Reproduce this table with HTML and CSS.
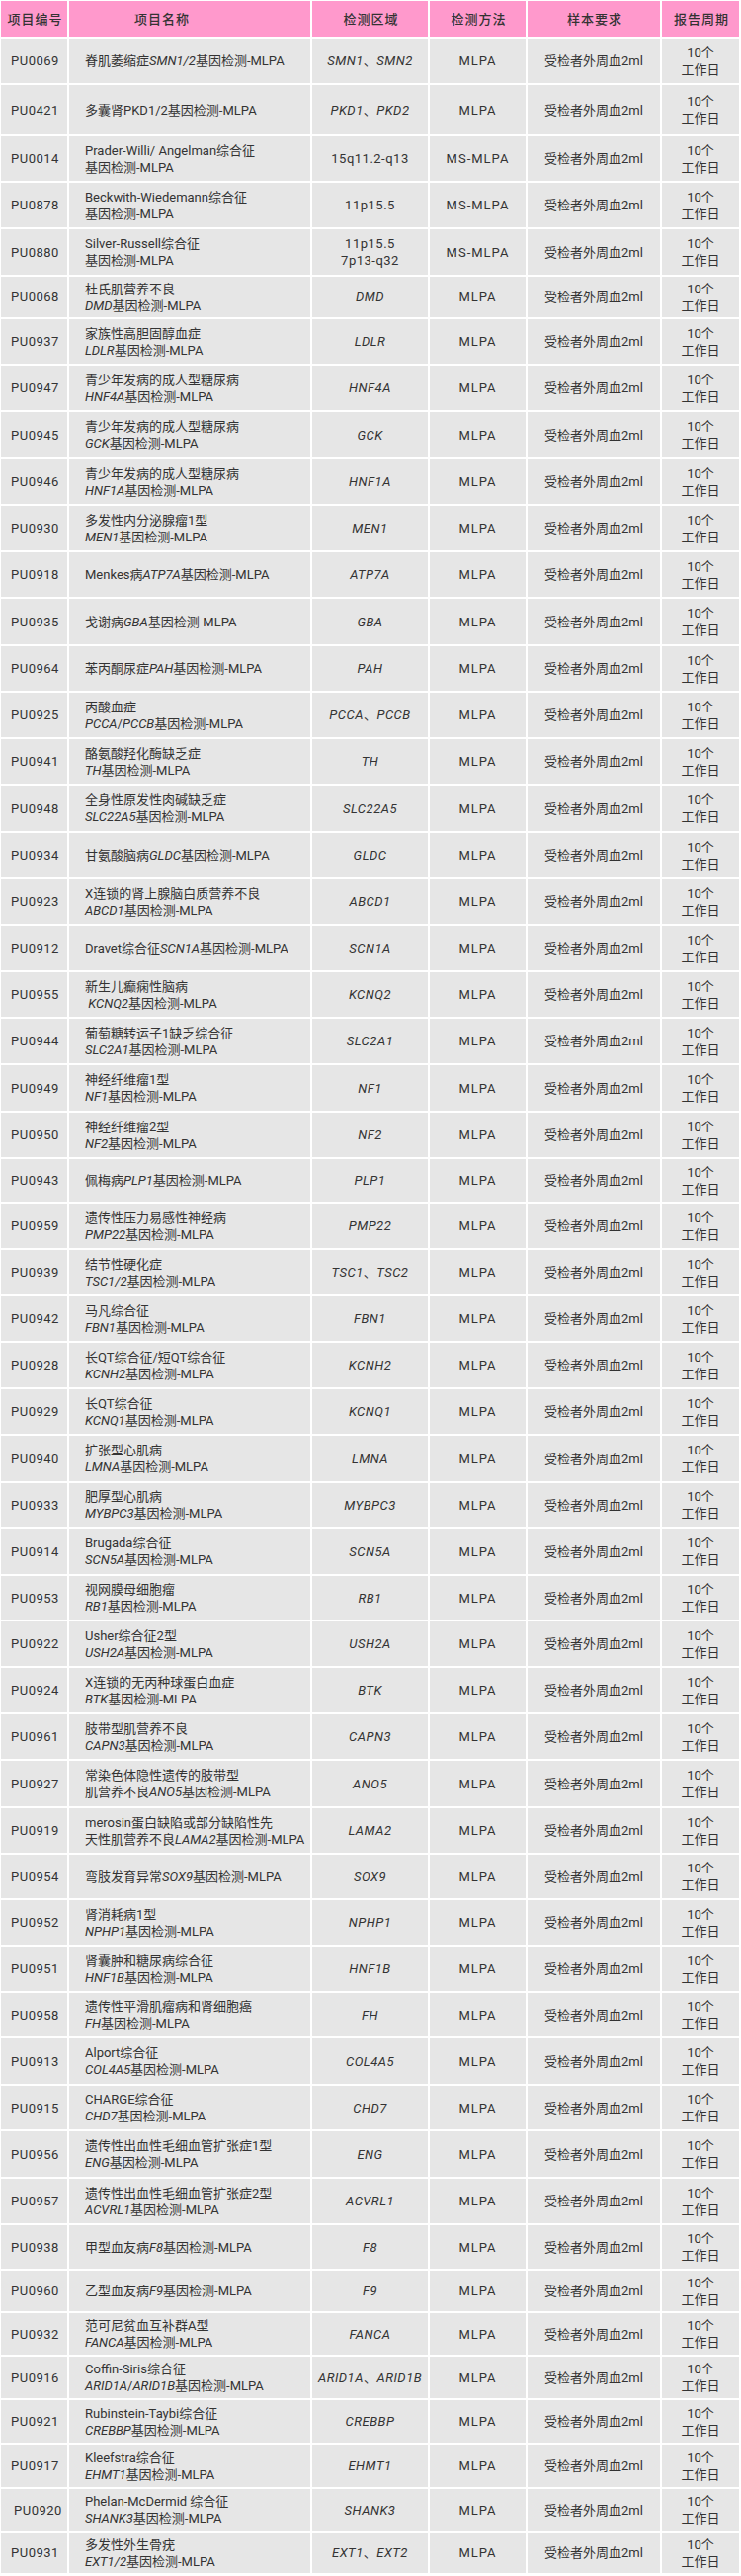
FILE: index.html
```html
<!DOCTYPE html>
<html lang="zh-CN">
<head>
<meta charset="utf-8">
<title>MLPA 检测项目</title>
<link rel="stylesheet" href="styles.css">
</head>
<body>
<div class="table">
  <div class="row head"><div class="cell"><span>项目编号</span></div><div class="cell hname"><span>项目名称</span></div><div class="cell"><span>检测区域</span></div><div class="cell"><span>检测方法</span></div><div class="cell"><span>样本要求</span></div><div class="cell"><span>报告周期</span></div></div>

  <div class="row"><div class="cell code"><span>PU0069</span></div><div class="cell name"><span>脊肌萎缩症<i>SMN1/2</i>基因检测-MLPA</span></div><div class="cell gene"><span><i>SMN1</i>、<i>SMN2</i></span></div><div class="cell m"><span>MLPA</span></div><div class="cell"><span>受检者外周血2ml</span></div><div class="cell"><span>10个<br>工作日</span></div></div>
  <div class="row"><div class="cell code"><span>PU0421</span></div><div class="cell name"><span>多囊肾PKD1/2基因检测-MLPA</span></div><div class="cell gene"><span><i>PKD1</i>、<i>PKD2</i></span></div><div class="cell m"><span>MLPA</span></div><div class="cell"><span>受检者外周血2ml</span></div><div class="cell"><span>10个<br>工作日</span></div></div>
  <div class="row"><div class="cell code"><span>PU0014</span></div><div class="cell name"><span>Prader-Willi/ Angelman综合征<br>基因检测-MLPA</span></div><div class="cell gene"><span>15q11.2-q13</span></div><div class="cell m"><span>MS-MLPA</span></div><div class="cell"><span>受检者外周血2ml</span></div><div class="cell"><span>10个<br>工作日</span></div></div>
  <div class="row"><div class="cell code"><span>PU0878</span></div><div class="cell name"><span>Beckwith-Wiedemann综合征<br>基因检测-MLPA</span></div><div class="cell gene"><span>11p15.5</span></div><div class="cell m"><span>MS-MLPA</span></div><div class="cell"><span>受检者外周血2ml</span></div><div class="cell"><span>10个<br>工作日</span></div></div>
  <div class="row"><div class="cell code"><span>PU0880</span></div><div class="cell name"><span>Silver-Russell综合征<br>基因检测-MLPA</span></div><div class="cell gene"><span>11p15.5<br>7p13-q32</span></div><div class="cell m"><span>MS-MLPA</span></div><div class="cell"><span>受检者外周血2ml</span></div><div class="cell"><span>10个<br>工作日</span></div></div>
  <div class="row"><div class="cell code"><span>PU0068</span></div><div class="cell name"><span>杜氏肌营养不良<br><i>DMD</i>基因检测-MLPA</span></div><div class="cell gene"><span><i>DMD</i></span></div><div class="cell m"><span>MLPA</span></div><div class="cell"><span>受检者外周血2ml</span></div><div class="cell"><span>10个<br>工作日</span></div></div>
  <div class="row"><div class="cell code"><span>PU0937</span></div><div class="cell name"><span>家族性高胆固醇血症<br><i>LDLR</i>基因检测-MLPA</span></div><div class="cell gene"><span><i>LDLR</i></span></div><div class="cell m"><span>MLPA</span></div><div class="cell"><span>受检者外周血2ml</span></div><div class="cell"><span>10个<br>工作日</span></div></div>
  <div class="row"><div class="cell code"><span>PU0947</span></div><div class="cell name"><span>青少年发病的成人型糖尿病<br><i>HNF4A</i>基因检测-MLPA</span></div><div class="cell gene"><span><i>HNF4A</i></span></div><div class="cell m"><span>MLPA</span></div><div class="cell"><span>受检者外周血2ml</span></div><div class="cell"><span>10个<br>工作日</span></div></div>
  <div class="row"><div class="cell code"><span>PU0945</span></div><div class="cell name"><span>青少年发病的成人型糖尿病<br><i>GCK</i>基因检测-MLPA</span></div><div class="cell gene"><span><i>GCK</i></span></div><div class="cell m"><span>MLPA</span></div><div class="cell"><span>受检者外周血2ml</span></div><div class="cell"><span>10个<br>工作日</span></div></div>
  <div class="row"><div class="cell code"><span>PU0946</span></div><div class="cell name"><span>青少年发病的成人型糖尿病<br><i>HNF1A</i>基因检测-MLPA</span></div><div class="cell gene"><span><i>HNF1A</i></span></div><div class="cell m"><span>MLPA</span></div><div class="cell"><span>受检者外周血2ml</span></div><div class="cell"><span>10个<br>工作日</span></div></div>
  <div class="row"><div class="cell code"><span>PU0930</span></div><div class="cell name"><span>多发性内分泌腺瘤1型<br><i>MEN1</i>基因检测-MLPA</span></div><div class="cell gene"><span><i>MEN1</i></span></div><div class="cell m"><span>MLPA</span></div><div class="cell"><span>受检者外周血2ml</span></div><div class="cell"><span>10个<br>工作日</span></div></div>
  <div class="row"><div class="cell code"><span>PU0918</span></div><div class="cell name"><span>Menkes病<i>ATP7A</i>基因检测-MLPA</span></div><div class="cell gene"><span><i>ATP7A</i></span></div><div class="cell m"><span>MLPA</span></div><div class="cell"><span>受检者外周血2ml</span></div><div class="cell"><span>10个<br>工作日</span></div></div>
  <div class="row"><div class="cell code"><span>PU0935</span></div><div class="cell name"><span>戈谢病<i>GBA</i>基因检测-MLPA</span></div><div class="cell gene"><span><i>GBA</i></span></div><div class="cell m"><span>MLPA</span></div><div class="cell"><span>受检者外周血2ml</span></div><div class="cell"><span>10个<br>工作日</span></div></div>
  <div class="row"><div class="cell code"><span>PU0964</span></div><div class="cell name"><span>苯丙酮尿症<i>PAH</i>基因检测-MLPA</span></div><div class="cell gene"><span><i>PAH</i></span></div><div class="cell m"><span>MLPA</span></div><div class="cell"><span>受检者外周血2ml</span></div><div class="cell"><span>10个<br>工作日</span></div></div>
  <div class="row"><div class="cell code"><span>PU0925</span></div><div class="cell name"><span>丙酸血症<br><i>PCCA</i>/<i>PCCB</i>基因检测-MLPA</span></div><div class="cell gene"><span><i>PCCA</i>、<i>PCCB</i></span></div><div class="cell m"><span>MLPA</span></div><div class="cell"><span>受检者外周血2ml</span></div><div class="cell"><span>10个<br>工作日</span></div></div>
  <div class="row"><div class="cell code"><span>PU0941</span></div><div class="cell name"><span>酪氨酸羟化酶缺乏症<br><i>TH</i>基因检测-MLPA</span></div><div class="cell gene"><span><i>TH</i></span></div><div class="cell m"><span>MLPA</span></div><div class="cell"><span>受检者外周血2ml</span></div><div class="cell"><span>10个<br>工作日</span></div></div>
  <div class="row"><div class="cell code"><span>PU0948</span></div><div class="cell name"><span>全身性原发性肉碱缺乏症<br><i>SLC22A5</i>基因检测-MLPA</span></div><div class="cell gene"><span><i>SLC22A5</i></span></div><div class="cell m"><span>MLPA</span></div><div class="cell"><span>受检者外周血2ml</span></div><div class="cell"><span>10个<br>工作日</span></div></div>
  <div class="row"><div class="cell code"><span>PU0934</span></div><div class="cell name"><span>甘氨酸脑病<i>GLDC</i>基因检测-MLPA</span></div><div class="cell gene"><span><i>GLDC</i></span></div><div class="cell m"><span>MLPA</span></div><div class="cell"><span>受检者外周血2ml</span></div><div class="cell"><span>10个<br>工作日</span></div></div>
  <div class="row"><div class="cell code"><span>PU0923</span></div><div class="cell name"><span>X连锁的肾上腺脑白质营养不良<br><i>ABCD1</i>基因检测-MLPA</span></div><div class="cell gene"><span><i>ABCD1</i></span></div><div class="cell m"><span>MLPA</span></div><div class="cell"><span>受检者外周血2ml</span></div><div class="cell"><span>10个<br>工作日</span></div></div>
  <div class="row"><div class="cell code"><span>PU0912</span></div><div class="cell name"><span>Dravet综合征<i>SCN1A</i>基因检测-MLPA</span></div><div class="cell gene"><span><i>SCN1A</i></span></div><div class="cell m"><span>MLPA</span></div><div class="cell"><span>受检者外周血2ml</span></div><div class="cell"><span>10个<br>工作日</span></div></div>
  <div class="row"><div class="cell code"><span>PU0955</span></div><div class="cell name"><span>新生儿癫痫性脑病<br>&nbsp;<i>KCNQ2</i>基因检测-MLPA</span></div><div class="cell gene"><span><i>KCNQ2</i></span></div><div class="cell m"><span>MLPA</span></div><div class="cell"><span>受检者外周血2ml</span></div><div class="cell"><span>10个<br>工作日</span></div></div>
  <div class="row"><div class="cell code"><span>PU0944</span></div><div class="cell name"><span>葡萄糖转运子1缺乏综合征<br><i>SLC2A1</i>基因检测-MLPA</span></div><div class="cell gene"><span><i>SLC2A1</i></span></div><div class="cell m"><span>MLPA</span></div><div class="cell"><span>受检者外周血2ml</span></div><div class="cell"><span>10个<br>工作日</span></div></div>
  <div class="row"><div class="cell code"><span>PU0949</span></div><div class="cell name"><span>神经纤维瘤1型<br><i>NF1</i>基因检测-MLPA</span></div><div class="cell gene"><span><i>NF1</i></span></div><div class="cell m"><span>MLPA</span></div><div class="cell"><span>受检者外周血2ml</span></div><div class="cell"><span>10个<br>工作日</span></div></div>
  <div class="row"><div class="cell code"><span>PU0950</span></div><div class="cell name"><span>神经纤维瘤2型<br><i>NF2</i>基因检测-MLPA</span></div><div class="cell gene"><span><i>NF2</i></span></div><div class="cell m"><span>MLPA</span></div><div class="cell"><span>受检者外周血2ml</span></div><div class="cell"><span>10个<br>工作日</span></div></div>
  <div class="row"><div class="cell code"><span>PU0943</span></div><div class="cell name"><span>佩梅病<i>PLP1</i>基因检测-MLPA</span></div><div class="cell gene"><span><i>PLP1</i></span></div><div class="cell m"><span>MLPA</span></div><div class="cell"><span>受检者外周血2ml</span></div><div class="cell"><span>10个<br>工作日</span></div></div>
  <div class="row"><div class="cell code"><span>PU0959</span></div><div class="cell name"><span>遗传性压力易感性神经病<br><i>PMP22</i>基因检测-MLPA</span></div><div class="cell gene"><span><i>PMP22</i></span></div><div class="cell m"><span>MLPA</span></div><div class="cell"><span>受检者外周血2ml</span></div><div class="cell"><span>10个<br>工作日</span></div></div>
  <div class="row"><div class="cell code"><span>PU0939</span></div><div class="cell name"><span>结节性硬化症<br><i>TSC1/2</i>基因检测-MLPA</span></div><div class="cell gene"><span><i>TSC1</i>、<i>TSC2</i></span></div><div class="cell m"><span>MLPA</span></div><div class="cell"><span>受检者外周血2ml</span></div><div class="cell"><span>10个<br>工作日</span></div></div>
  <div class="row"><div class="cell code"><span>PU0942</span></div><div class="cell name"><span>马凡综合征<br><i>FBN1</i>基因检测-MLPA</span></div><div class="cell gene"><span><i>FBN1</i></span></div><div class="cell m"><span>MLPA</span></div><div class="cell"><span>受检者外周血2ml</span></div><div class="cell"><span>10个<br>工作日</span></div></div>
  <div class="row"><div class="cell code"><span>PU0928</span></div><div class="cell name"><span>长QT综合征/短QT综合征<br><i>KCNH2</i>基因检测-MLPA</span></div><div class="cell gene"><span><i>KCNH2</i></span></div><div class="cell m"><span>MLPA</span></div><div class="cell"><span>受检者外周血2ml</span></div><div class="cell"><span>10个<br>工作日</span></div></div>
  <div class="row"><div class="cell code"><span>PU0929</span></div><div class="cell name"><span>长QT综合征<br><i>KCNQ1</i>基因检测-MLPA</span></div><div class="cell gene"><span><i>KCNQ1</i></span></div><div class="cell m"><span>MLPA</span></div><div class="cell"><span>受检者外周血2ml</span></div><div class="cell"><span>10个<br>工作日</span></div></div>
  <div class="row"><div class="cell code"><span>PU0940</span></div><div class="cell name"><span>扩张型心肌病<br><i>LMNA</i>基因检测-MLPA</span></div><div class="cell gene"><span><i>LMNA</i></span></div><div class="cell m"><span>MLPA</span></div><div class="cell"><span>受检者外周血2ml</span></div><div class="cell"><span>10个<br>工作日</span></div></div>
  <div class="row"><div class="cell code"><span>PU0933</span></div><div class="cell name"><span>肥厚型心肌病<br><i>MYBPC3</i>基因检测-MLPA</span></div><div class="cell gene"><span><i>MYBPC3</i></span></div><div class="cell m"><span>MLPA</span></div><div class="cell"><span>受检者外周血2ml</span></div><div class="cell"><span>10个<br>工作日</span></div></div>
  <div class="row"><div class="cell code"><span>PU0914</span></div><div class="cell name"><span>Brugada综合征<br><i>SCN5A</i>基因检测-MLPA</span></div><div class="cell gene"><span><i>SCN5A</i></span></div><div class="cell m"><span>MLPA</span></div><div class="cell"><span>受检者外周血2ml</span></div><div class="cell"><span>10个<br>工作日</span></div></div>
  <div class="row"><div class="cell code"><span>PU0953</span></div><div class="cell name"><span>视网膜母细胞瘤<br><i>RB1</i>基因检测-MLPA</span></div><div class="cell gene"><span><i>RB1</i></span></div><div class="cell m"><span>MLPA</span></div><div class="cell"><span>受检者外周血2ml</span></div><div class="cell"><span>10个<br>工作日</span></div></div>
  <div class="row"><div class="cell code"><span>PU0922</span></div><div class="cell name"><span>Usher综合征2型<br><i>USH2A</i>基因检测-MLPA</span></div><div class="cell gene"><span><i>USH2A</i></span></div><div class="cell m"><span>MLPA</span></div><div class="cell"><span>受检者外周血2ml</span></div><div class="cell"><span>10个<br>工作日</span></div></div>
  <div class="row"><div class="cell code"><span>PU0924</span></div><div class="cell name"><span>X连锁的无丙种球蛋白血症<br><i>BTK</i>基因检测-MLPA</span></div><div class="cell gene"><span><i>BTK</i></span></div><div class="cell m"><span>MLPA</span></div><div class="cell"><span>受检者外周血2ml</span></div><div class="cell"><span>10个<br>工作日</span></div></div>
  <div class="row"><div class="cell code"><span>PU0961</span></div><div class="cell name"><span>肢带型肌营养不良<br><i>CAPN3</i>基因检测-MLPA</span></div><div class="cell gene"><span><i>CAPN3</i></span></div><div class="cell m"><span>MLPA</span></div><div class="cell"><span>受检者外周血2ml</span></div><div class="cell"><span>10个<br>工作日</span></div></div>
  <div class="row"><div class="cell code"><span>PU0927</span></div><div class="cell name"><span>常染色体隐性遗传的肢带型<br>肌营养不良<i>ANO5</i>基因检测-MLPA</span></div><div class="cell gene"><span><i>ANO5</i></span></div><div class="cell m"><span>MLPA</span></div><div class="cell"><span>受检者外周血2ml</span></div><div class="cell"><span>10个<br>工作日</span></div></div>
  <div class="row"><div class="cell code"><span>PU0919</span></div><div class="cell name"><span>merosin蛋白缺陷或部分缺陷性先<br>天性肌营养不良<i>LAMA2</i>基因检测-MLPA</span></div><div class="cell gene"><span><i>LAMA2</i></span></div><div class="cell m"><span>MLPA</span></div><div class="cell"><span>受检者外周血2ml</span></div><div class="cell"><span>10个<br>工作日</span></div></div>
  <div class="row"><div class="cell code"><span>PU0954</span></div><div class="cell name"><span>弯肢发育异常<i>SOX9</i>基因检测-MLPA</span></div><div class="cell gene"><span><i>SOX9</i></span></div><div class="cell m"><span>MLPA</span></div><div class="cell"><span>受检者外周血2ml</span></div><div class="cell"><span>10个<br>工作日</span></div></div>
  <div class="row"><div class="cell code"><span>PU0952</span></div><div class="cell name"><span>肾消耗病1型<br><i>NPHP1</i>基因检测-MLPA</span></div><div class="cell gene"><span><i>NPHP1</i></span></div><div class="cell m"><span>MLPA</span></div><div class="cell"><span>受检者外周血2ml</span></div><div class="cell"><span>10个<br>工作日</span></div></div>
  <div class="row"><div class="cell code"><span>PU0951</span></div><div class="cell name"><span>肾囊肿和糖尿病综合征<br><i>HNF1B</i>基因检测-MLPA</span></div><div class="cell gene"><span><i>HNF1B</i></span></div><div class="cell m"><span>MLPA</span></div><div class="cell"><span>受检者外周血2ml</span></div><div class="cell"><span>10个<br>工作日</span></div></div>
  <div class="row"><div class="cell code"><span>PU0958</span></div><div class="cell name"><span>遗传性平滑肌瘤病和肾细胞癌<br><i>FH</i>基因检测-MLPA</span></div><div class="cell gene"><span><i>FH</i></span></div><div class="cell m"><span>MLPA</span></div><div class="cell"><span>受检者外周血2ml</span></div><div class="cell"><span>10个<br>工作日</span></div></div>
  <div class="row"><div class="cell code"><span>PU0913</span></div><div class="cell name"><span>Alport综合征<br><i>COL4A5</i>基因检测-MLPA</span></div><div class="cell gene"><span><i>COL4A5</i></span></div><div class="cell m"><span>MLPA</span></div><div class="cell"><span>受检者外周血2ml</span></div><div class="cell"><span>10个<br>工作日</span></div></div>
  <div class="row"><div class="cell code"><span>PU0915</span></div><div class="cell name"><span>CHARGE综合征<br><i>CHD7</i>基因检测-MLPA</span></div><div class="cell gene"><span><i>CHD7</i></span></div><div class="cell m"><span>MLPA</span></div><div class="cell"><span>受检者外周血2ml</span></div><div class="cell"><span>10个<br>工作日</span></div></div>
  <div class="row"><div class="cell code"><span>PU0956</span></div><div class="cell name"><span>遗传性出血性毛细血管扩张症1型<br><i>ENG</i>基因检测-MLPA</span></div><div class="cell gene"><span><i>ENG</i></span></div><div class="cell m"><span>MLPA</span></div><div class="cell"><span>受检者外周血2ml</span></div><div class="cell"><span>10个<br>工作日</span></div></div>
  <div class="row"><div class="cell code"><span>PU0957</span></div><div class="cell name"><span>遗传性出血性毛细血管扩张症2型<br><i>ACVRL1</i>基因检测-MLPA</span></div><div class="cell gene"><span><i>ACVRL1</i></span></div><div class="cell m"><span>MLPA</span></div><div class="cell"><span>受检者外周血2ml</span></div><div class="cell"><span>10个<br>工作日</span></div></div>
  <div class="row"><div class="cell code"><span>PU0938</span></div><div class="cell name"><span>甲型血友病<i>F8</i>基因检测-MLPA</span></div><div class="cell gene"><span><i>F8</i></span></div><div class="cell m"><span>MLPA</span></div><div class="cell"><span>受检者外周血2ml</span></div><div class="cell"><span>10个<br>工作日</span></div></div>
  <div class="row"><div class="cell code"><span>PU0960</span></div><div class="cell name"><span>乙型血友病<i>F9</i>基因检测-MLPA</span></div><div class="cell gene"><span><i>F9</i></span></div><div class="cell m"><span>MLPA</span></div><div class="cell"><span>受检者外周血2ml</span></div><div class="cell"><span>10个<br>工作日</span></div></div>
  <div class="row"><div class="cell code"><span>PU0932</span></div><div class="cell name"><span>范可尼贫血互补群A型<br><i>FANCA</i>基因检测-MLPA</span></div><div class="cell gene"><span><i>FANCA</i></span></div><div class="cell m"><span>MLPA</span></div><div class="cell"><span>受检者外周血2ml</span></div><div class="cell"><span>10个<br>工作日</span></div></div>
  <div class="row"><div class="cell code"><span>PU0916</span></div><div class="cell name"><span>Coffin-Siris综合征<br><i>ARID1A</i>/<i>ARID1B</i>基因检测-MLPA</span></div><div class="cell gene"><span><i>ARID1A</i>、<i>ARID1B</i></span></div><div class="cell m"><span>MLPA</span></div><div class="cell"><span>受检者外周血2ml</span></div><div class="cell"><span>10个<br>工作日</span></div></div>
  <div class="row"><div class="cell code"><span>PU0921</span></div><div class="cell name"><span>Rubinstein-Taybi综合征<br><i>CREBBP</i>基因检测-MLPA</span></div><div class="cell gene"><span><i>CREBBP</i></span></div><div class="cell m"><span>MLPA</span></div><div class="cell"><span>受检者外周血2ml</span></div><div class="cell"><span>10个<br>工作日</span></div></div>
  <div class="row"><div class="cell code"><span>PU0917</span></div><div class="cell name"><span>Kleefstra综合征<br><i>EHMT1</i>基因检测-MLPA</span></div><div class="cell gene"><span><i>EHMT1</i></span></div><div class="cell m"><span>MLPA</span></div><div class="cell"><span>受检者外周血2ml</span></div><div class="cell"><span>10个<br>工作日</span></div></div>
  <div class="row"><div class="cell code shift"><span>PU0920</span></div><div class="cell name"><span>Phelan-McDermid 综合征<br><i>SHANK3</i>基因检测-MLPA</span></div><div class="cell gene"><span><i>SHANK3</i></span></div><div class="cell m"><span>MLPA</span></div><div class="cell"><span>受检者外周血2ml</span></div><div class="cell"><span>10个<br>工作日</span></div></div>
  <div class="row"><div class="cell code"><span>PU0931</span></div><div class="cell name"><span>多发性外生骨疣<br><i>EXT1/2</i>基因检测-MLPA</span></div><div class="cell gene"><span><i>EXT1</i>、<i>EXT2</i></span></div><div class="cell m"><span>MLPA</span></div><div class="cell"><span>受检者外周血2ml</span></div><div class="cell"><span>10个<br>工作日</span></div></div>
</div>
</body>
</html>
```

FILE: styles.css
```css
html, body {
  margin: 0;
  padding: 0;
  background: #ffffff;
}

body {
  font-family: Roboto, "Noto Sans CJK SC", sans-serif;
  font-size: 13px;
  color: #333333;
}

.table {
  display: grid;
  width: 750px;
  box-sizing: border-box;
  padding: 1px 2px 3px 1px;
  column-gap: 2px;
  row-gap: 2px;
  grid-template-columns: 67px 244px 117px 97px 134px 78px;
  grid-template-rows:
    36px
    45px 50px 45px 45px 46px 41px 45px 45px 46px 45px
    45px 45px 46px 45px 45px 45px 46px 45px 45px 45px
    45px 45px 46px 45px 43px 45px 45px 45px 45px 45px
    46px 44px 46px 44px 45px 45px 45px 46px 45px 44px
    45px 45px 44px 46px 44px 46px 45px 44px 41px 42px
    42px 43px 43px 42px 41px;
}

.row {
  display: contents;
}

.cell {
  background: #e6e6e6;
  display: flex;
  align-items: center;
  justify-content: center;
  text-align: center;
  line-height: 17px;
  white-space: nowrap;
  overflow: hidden;
}

.head .cell {
  background: #ff99cc;
  font-weight: 500;
  letter-spacing: 1px;
  padding-left: 2px;
}

.head .hname {
  justify-content: flex-start;
  padding-left: 66px;
}

.code {
  letter-spacing: 0.5px;
  padding-left: 2px;
}

.name {
  justify-content: flex-start;
  text-align: left;
  padding-left: 16px;
}

.shift {
  padding-left: 8px;
}

.m {
  letter-spacing: 1px;
}

.gene {
  letter-spacing: 0.5px;
}

i {
  font-style: italic;
}
```
